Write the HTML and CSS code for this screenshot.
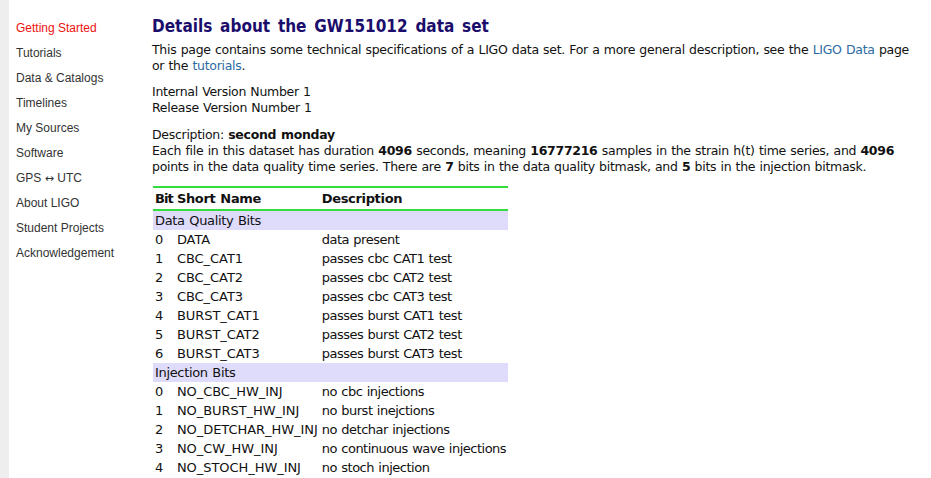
FILE: index.html
```html
<!DOCTYPE html>
<html>
<head>
<meta charset="utf-8">
<title>Details about the GW151012 data set</title>
<link rel="stylesheet" href="styles.css">
</head>
<body>
<div class="page">
  <nav class="sidebar">
    <a class="nav-item active" href="#">Getting Started</a>
    <a class="nav-item" href="#">Tutorials</a>
    <a class="nav-item" href="#">Data &amp; Catalogs</a>
    <a class="nav-item" href="#">Timelines</a>
    <a class="nav-item" href="#">My Sources</a>
    <a class="nav-item" href="#">Software</a>
    <a class="nav-item" href="#">GPS <span class="arrow">&harr;</span> UTC</a>
    <a class="nav-item" href="#">About LIGO</a>
    <a class="nav-item" href="#">Student Projects</a>
    <a class="nav-item" href="#">Acknowledgement</a>
  </nav>
  <main class="content">
    <h1 class="title">Details about the GW151012 data set</h1>
    <p class="intro">This page contains some technical specifications of a LIGO data set. For a more general description, see the <a class="link" href="#">LIGO Data</a> page or the <a class="link" href="#">tutorials</a>.</p>
    <p class="versions">Internal Version Number 1<br>Release Version Number 1</p>
    <p class="desc">Description: <b>second monday</b><br>Each file in this dataset has duration <b>4096</b> seconds, meaning <b>16777216</b> samples in the strain h(t) time series, and <b>4096</b> points in the data quality time series. There are <b>7</b> bits in the data quality bitmask, and <b>5</b> bits in the injection bitmask.</p>
    <table class="bits">
      <thead>
        <tr class="head-row"><th>Bit</th><th>Short Name</th><th>Description</th></tr>
      </thead>
      <tbody>
        <tr class="group"><td colspan="3">Data Quality Bits</td></tr>
        <tr><td>0</td><td>DATA</td><td>data present</td></tr>
        <tr><td>1</td><td>CBC_CAT1</td><td>passes cbc CAT1 test</td></tr>
        <tr><td>2</td><td>CBC_CAT2</td><td>passes cbc CAT2 test</td></tr>
        <tr><td>3</td><td>CBC_CAT3</td><td>passes cbc CAT3 test</td></tr>
        <tr><td>4</td><td>BURST_CAT1</td><td>passes burst CAT1 test</td></tr>
        <tr><td>5</td><td>BURST_CAT2</td><td>passes burst CAT2 test</td></tr>
        <tr><td>6</td><td>BURST_CAT3</td><td>passes burst CAT3 test</td></tr>
        <tr class="group"><td colspan="3">Injection Bits</td></tr>
        <tr><td>0</td><td>NO_CBC_HW_INJ</td><td>no cbc injections</td></tr>
        <tr><td>1</td><td>NO_BURST_HW_INJ</td><td>no burst inejctions</td></tr>
        <tr><td>2</td><td>NO_DETCHAR_HW_INJ</td><td>no detchar injections</td></tr>
        <tr><td>3</td><td>NO_CW_HW_INJ</td><td>no continuous wave injections</td></tr>
        <tr><td>4</td><td>NO_STOCH_HW_INJ</td><td>no stoch injection</td></tr>
      </tbody>
    </table>
  </main>
</div>
</body>
</html>
```

FILE: styles.css
```css
html, body {
  margin: 0;
  padding: 0;
  background: #ffffff;
}

.page {
  display: flex;
  align-items: flex-start;
  min-height: 478px;
}

.sidebar {
  width: 143px;
  flex: 0 0 143px;
  border-left: 9px solid #eeeeee;
  min-height: 478px;
  box-sizing: content-box;
  display: flex;
  flex-direction: column;
  padding-top: 16px;
}

.nav-item {
  display: block;
  padding-left: 7px;
  font-family: "Liberation Sans", Arial, sans-serif;
  font-size: 12px;
  line-height: 25px;
  color: #333333;
  text-decoration: none;
}

.nav-item.active {
  color: #ee1111;
}

.arrow {
  font-family: "DejaVu Sans", sans-serif;
  font-size: 11px;
}

.content {
  flex: 1;
  padding-right: 16px;
  font-family: Verdana, "DejaVu Sans", sans-serif;
  font-size: 12.5px;
  line-height: 16px;
  letter-spacing: -0.29px;
  word-spacing: 0.6px;
  color: #111111;
}

.title {
  margin: 16px 0 6px;
  font-family: "DejaVu Sans Condensed", "DejaVu Sans", sans-serif;
  font-size: 17px;
  line-height: 20px;
  letter-spacing: 0;
  word-spacing: 2.5px;
  font-weight: bold;
  color: #1b0d6c;
}

.intro {
  margin: 0 0 10px;
}

.versions {
  margin: 0 0 11px;
}

.desc {
  margin: 0 0 11px;
}

.link {
  color: #2d6aa3;
  text-decoration: none;
}

.bits {
  border-collapse: collapse;
  margin-left: 1px;
  font-size: 13px;
  letter-spacing: -0.33px;
  word-spacing: 0.75px;
}

.bits th {
  text-align: left;
  font-weight: bold;
  padding: 2px 2px;
  line-height: 17px;
}

.bits th:first-child {
  letter-spacing: -0.9px;
}

.head-row {
  border-top: 2px solid #33dd3c;
  border-bottom: 2px solid #33dd3c;
}

.bits td {
  padding: 1px 2px;
  line-height: 17px;
  white-space: nowrap;
}

.bits td:nth-child(2) {
  letter-spacing: -0.05px;
}

.bits td:nth-child(3) {
  letter-spacing: -0.5px;
}

.group td {
  background: #dedbfb;
}
```
